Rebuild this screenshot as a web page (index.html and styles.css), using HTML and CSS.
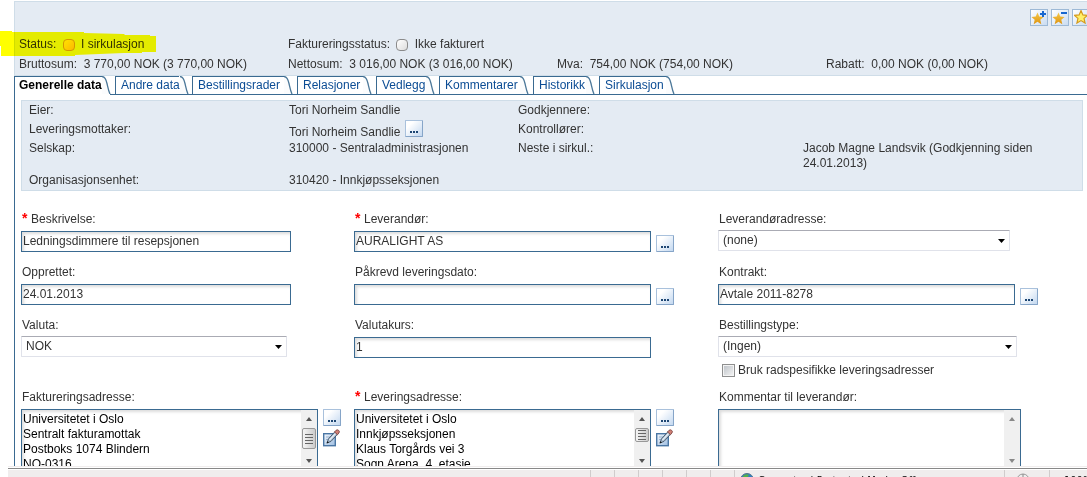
FILE: index.html
```html
<!DOCTYPE html>
<html lang="no">
<head>
<meta charset="utf-8">
<title>Bestilling</title>
<link rel="stylesheet" href="styles.css">
</head>
<body>
<svg width="0" height="0" class="defs" aria-hidden="true">
  <defs>
    <linearGradient id="gold" x1="0" y1="0" x2="0" y2="1"><stop offset="0" stop-color="#f6c84a"/><stop offset="1" stop-color="#dd9410"/></linearGradient>
    <linearGradient id="sheet" x1="0" y1="0" x2="1" y2="1"><stop offset="0" stop-color="#f4f8fd"/><stop offset="1" stop-color="#9cbce0"/></linearGradient>
    <symbol id="star" viewBox="0 0 12 12"><path d="M6 0.5 7.6 4.2 11.6 4.6 8.6 7.2 9.5 11.2 6 9.1 2.5 11.2 3.4 7.2 0.4 4.6 4.4 4.2Z"/></symbol>
    <symbol id="slant" viewBox="0 0 9 18"><path d="M0 0C3 0 4 2 5 7S6.500 15 8 18H0Z" fill="#fbfcfd"/><path d="M0 .5C3 .5 4 3 5 7.500S6.500 15 8 18" fill="none" stroke="#4c7899" stroke-width="1.300"/></symbol>
    <symbol id="pencil" viewBox="0 0 17 18">
      <rect x=".7" y="4.700" width="11.600" height="12" fill="url(#sheet)" stroke="#4a76a4" stroke-width="1.400"/>
      <path d="M3 8h4M3 10.500h2" stroke="#9bb4cf"/>
      <path d="M4 14 5.500 9.800 11.700 3 14.300 5.500 8 12.400Z" fill="#a9bccf" stroke="#33485c" stroke-width=".8"/>
      <path d="M6.400 11.200 13 4.200" stroke="#eef4fa" stroke-width="1.200"/>
      <path d="M11.500 3 13 1.300Q14.300.2 15.700 1.400T15.900 4L14.500 5.700Z" fill="#d08076" stroke="#743b39" stroke-width=".8"/>
      <path d="M3.500 14.600 4.500 12.200 6 13.600Z" fill="#111"/>
    </symbol>
  </defs>
</svg>
<div class="page">
  <header class="summary">
    <div class="tools">
      <button class="tool" aria-label="Legg til favoritt"><svg viewBox="0 0 16 15"><use href="#star" x="0" y="2" width="13" height="13" fill="url(#gold)"/><path d="M9 4h6M12 1v6" stroke="#1767cf" stroke-width="2"/></svg></button>
      <button class="tool" aria-label="Fjern favoritt"><svg viewBox="0 0 16 15"><use href="#star" x="0" y="2" width="13" height="13" fill="url(#gold)"/><path d="M9 3h6" stroke="#1767cf" stroke-width="2"/></svg></button>
      <button class="tool" aria-label="Favoritter"><svg viewBox="0 0 16 15"><use href="#star" x="1" y="0" width="14" height="14" fill="#fff06a" stroke="#d59a1c"/></svg></button>
    </div>
    <div class="sums">
      <div>Status: <i class="lamp lamp-on"></i> I sirkulasjon</div>
      <div class="wide">Faktureringsstatus: <i class="lamp"></i> Ikke fakturert</div>
      <div>Bruttosum:&nbsp; 3 770,00 NOK (3 770,00 NOK)</div>
      <div>Nettosum:&nbsp; 3 016,00 NOK (3 016,00 NOK)</div>
      <div>Mva:&nbsp; 754,00 NOK (754,00 NOK)</div>
      <div>Rabatt:&nbsp; 0,00 NOK (0,00 NOK)</div>
    </div>
    <svg class="marker" viewBox="0 0 157 28" aria-hidden="true"><path d="M0 1H12V2L84 2V3L124 4 125 5H150V6H156V22H142V23H124L75 25V26H37L1 26V16H0Z" fill="#ff0"/></svg>
  </header>

  <nav class="tabs">
    <a class="tab active" href="#">Generelle data<svg><use href="#slant"/></svg></a>
    <a class="tab" href="#">Andre data<svg><use href="#slant"/></svg></a>
    <a class="tab" href="#">Bestillingsrader<svg><use href="#slant"/></svg></a>
    <a class="tab" href="#">Relasjoner<svg><use href="#slant"/></svg></a>
    <a class="tab" href="#">Vedlegg<svg><use href="#slant"/></svg></a>
    <a class="tab" href="#">Kommentarer<svg><use href="#slant"/></svg></a>
    <a class="tab" href="#">Historikk<svg><use href="#slant"/></svg></a>
    <a class="tab" href="#">Sirkulasjon<svg><use href="#slant"/></svg></a>
  </nav>

  <main class="content">
    <section class="info">
      <span>Eier:</span><span>Tori Norheim Sandlie</span><span>Godkjennere:</span><span></span>
      <span>Leveringsmottaker:</span><span class="pick">Tori Norheim Sandlie <button class="more" aria-label="Velg mottaker"></button></span><span>Kontrollører:</span><span></span>
      <span>Selskap:</span><span>310000 - Sentraladministrasjonen</span><span>Neste i sirkul.:</span><span>Jacob Magne Landsvik (Godkjenning siden 24.01.2013)</span>
      <span>Organisasjonsenhet:</span><span>310420 - Innkjøpsseksjonen</span>
    </section>

    <form class="form">
      <div class="field"><label for="f1"><b>*</b>Beskrivelse:</label><div class="row"><input class="box short" id="f1" value="Ledningsdimmere til resepsjonen"></div></div>
      <div class="field"><label for="f2"><b>*</b>Leverandør:</label><div class="row"><input class="box" id="f2" value="AURALIGHT AS"><button type="button" class="more" aria-label="Velg leverandør"></button></div></div>
      <div class="field"><label for="f3">Leverandøradresse:</label><div class="drop"><select id="f3"><option>(none)</option></select></div></div>

      <div class="field"><label for="f4">Opprettet:</label><div class="row"><input class="box short" id="f4" value="24.01.2013"></div></div>
      <div class="field"><label for="f5">Påkrevd leveringsdato:</label><div class="row"><input class="box" id="f5"><button type="button" class="more" aria-label="Velg dato"></button></div></div>
      <div class="field"><label for="f6">Kontrakt:</label><div class="row"><input class="box" id="f6" value="Avtale 2011-8278"><button type="button" class="more" aria-label="Velg kontrakt"></button></div></div>

      <div class="field"><label for="f7">Valuta:</label><div class="drop drop-s"><select id="f7"><option>NOK</option></select></div></div>
      <div class="field"><label for="f8">Valutakurs:</label><div class="row"><input class="box" id="f8" value="1"></div></div>
      <div class="field"><label for="f9">Bestillingstype:</label><div class="drop drop-l"><select id="f9"><option>(Ingen)</option></select></div>
        <div class="check"><input type="checkbox" id="f10"><label for="f10">Bruk radspesifikke leveringsadresser</label></div></div>

      <div class="field"><label for="f11">Faktureringsadresse:</label>
        <div class="row top"><div class="area"><textarea id="f11">Universitetet i Oslo
Sentralt fakturamottak
Postboks 1074 Blindern
NO-0316</textarea><div class="scroll"><i class="up"></i><i class="thumb"></i><i class="down"></i></div></div>
        <div class="side"><button type="button" class="more" aria-label="Velg adresse"></button><button type="button" class="edit" aria-label="Rediger"><svg width="17" height="18"><use href="#pencil"/></svg></button></div></div></div>
      <div class="field"><label for="f12"><b>*</b>Leveringsadresse:</label>
        <div class="row top"><div class="area"><textarea id="f12">Universitetet i Oslo
Innkjøpsseksjonen
Klaus Torgårds vei 3
Sogn Arena, 4. etasje</textarea><div class="scroll"><i class="up"></i><i class="thumb thumb-s"></i><i class="down"></i></div></div>
        <div class="side"><button type="button" class="more" aria-label="Velg adresse"></button><button type="button" class="edit" aria-label="Rediger"><svg width="17" height="18"><use href="#pencil"/></svg></button></div></div></div>
      <div class="field"><label for="f13">Kommentar til leverandør:</label>
        <div class="row top"><div class="area area-l"><textarea id="f13"></textarea><div class="scroll off"><i class="up"></i><i class="down"></i></div></div></div></div>
    </form>
  </main>

  <footer class="statusbar">
    <span class="cell"></span><span class="cell"></span><span class="cell"></span><span class="cell"></span><span class="cell"></span><span class="cell"></span>
    <span class="cell zone"><svg width="14" height="14" viewBox="0 0 14 14"><circle cx="7" cy="7" r="6.500" fill="#2f7fc4" stroke="#55758c"/><path d="M3 3Q6 0 9 2L7 5 3 6ZM9 5l4 1-2 4Z" fill="#55b04a"/></svg>Computer | Protected Mode: Off</span>
    <span class="cell lock"><svg width="14" height="14" viewBox="0 0 14 14"><circle cx="7" cy="7" r="6" fill="#eee" stroke="#999"/><path d="M7 1v6" stroke="#888"/></svg></span>
    <span class="cell zoom"><svg width="12" height="14" viewBox="0 0 12 14"><circle cx="6" cy="6" r="5.500" fill="#d9ecfb" stroke="#6d94b8"/><path d="M6 1v9M2 6h8" stroke="#1660b5" stroke-width="2"/></svg>100%</span>
  </footer>
</div>
</body>
</html>
```
FILE: styles.css
```css
* { box-sizing: border-box; }
body { margin: 0; background: #fff; color: #333; font: 12px/15px "Liberation Sans", Arial, sans-serif; }
button, input, select, textarea { font: inherit; color: inherit; margin: 0; }
.defs { position: absolute; }
.page { display: flex; flex-direction: column; height: 100vh; overflow: hidden; }

.summary { position: relative; flex: none; margin: 1px 0 0 14px; padding: 7px 0 3px 4px; background: #e4ebf3; border: 1px solid #cfdde8; border-right: 0; }
.tools { display: flex; justify-content: flex-end; gap: 3px; margin-right: -3px; }
.tool { width: 18px; height: 17px; padding: 0; border: 1px solid #9db9d6; background: linear-gradient(135deg, #fff, #cadcf1); }
.tool svg { display: block; width: 16px; height: 15px; }
.sums { display: grid; grid-template-columns: 269fr 269fr 269fr 261fr; row-gap: 5px; padding-top: 11px; white-space: nowrap; }
.wide { grid-column: span 3; }
.lamp { display: inline-block; width: 12px; height: 12px; margin: 0 3px; vertical-align: -3px; border: 1px solid #8b8b8b; border-radius: 4px; background: linear-gradient(135deg, #fff, #ddd); }
.lamp-on { border-color: #d59600; background: linear-gradient(135deg, #ffe34d, #fdb813); }
.marker { position: absolute; left: -15px; top: 28px; width: 157px; height: 28px; mix-blend-mode: multiply; }

.tabs { flex: none; display: grid; grid-template-columns: 96px 72px 100px 74px 58px 89px 61px 75px; gap: 5px; margin-left: 14px; height: 19px; border-bottom: 1px solid #3a6a91; }
.tab { display: flex; justify-content: space-between; height: 18px; padding-left: 5px; border-left: 1px solid #3a6a91; color: #0b4c94; line-height: 19px; text-decoration: none; white-space: nowrap; background: linear-gradient(#3a6a91, #3a6a91) 0 0 / calc(100% - 8px) 1px no-repeat; }
.tab svg { flex: none; width: 9px; height: 18px; margin-right: -1px; }
.active { height: 19px; padding-left: 4px; background-color: #fff; color: #000; font-weight: bold; }

.content { flex: 1; min-height: 0; overflow: hidden; margin-left: 14px; padding: 5px 4px 0 6px; border-left: 1px solid #3a6a91; }
.info { display: grid; grid-template-columns: 260fr 229fr 285fr 279fr; grid-template-rows: 16px 22px 32px 15px; padding: 2px 0 2px 7px; border: 1px solid #cfdde8; background: #e4ebf3; }
.info span:nth-child(12) { padding-right: 30px; }
.info span:nth-child(n+5):nth-child(-n+8) { padding-top: 3px; }
.info .pick:nth-child(6) { display: flex; align-items: flex-end; gap: 5px; padding: 0 0 1px; }
.pick .more { margin-bottom: 3px; }

.form { display: grid; grid-template-columns: 333fr 364fr 365fr; padding-top: 21px; }
.field { min-height: 53px; }
.field > label { display: block; padding-left: 1px; margin-bottom: 4px; }
.field b { display: inline-block; width: 9px; color: #f00; font-size: 14px; line-height: 12px; }
.row { display: flex; align-items: flex-end; gap: 5px; }
.box { width: 297px; height: 21px; padding: 0 1px 2px; border: 1px solid #3a6a91; background: #fff; box-shadow: inset 2px 2px 3px #ddd; }
.short { width: 270px; }
.more { position: relative; flex: none; width: 18px; height: 17px; padding: 0; border: 1px solid #a9c1dc; border-right-color: #86a5c8; border-bottom-color: #86a5c8; border-radius: 1px; background: linear-gradient(135deg, #fff 25%, #c3d8f0); }
.more::after { content: ""; position: absolute; left: 4px; bottom: 3px; width: 8px; height: 2px; background: repeating-linear-gradient(90deg, #1d4673 0 2px, transparent 2px 3px); }
.drop { position: relative; width: 292px; margin-top: -1px; }
.drop-s { width: 266px; }
.drop-l { width: 299px; }
.drop select { display: block; appearance: none; width: 100%; height: 21px; padding: 0 4px; border: 1px solid #e0e2ea; border-top-color: #aaabb4; border-radius: 1px; background: #fff; }
.drop::after { content: ""; position: absolute; right: 5px; top: 9px; width: 7px; height: 4px; background: #000; clip-path: polygon(0 0, 100% 0, 50% 100%); pointer-events: none; }
.check { display: flex; align-items: center; gap: 3px; padding: 6px 0 12px 4px; }
.check input { appearance: none; width: 13px; height: 13px; border: 1px solid #8e8f8f; background: linear-gradient(135deg, #bbc0c6, #f6f6f6); box-shadow: inset 0 0 0 1px #f4f4f4; }
.top { align-items: flex-start; }
.area { display: flex; width: 297px; height: 62px; border: 1px solid #3a6a91; box-shadow: inset 2px 2px 3px #ddd; }
.area-l { width: 303px; }
.area textarea { flex: 1; min-width: 0; padding: 2px 1px; border: 0; background: none; color: #000; resize: none; overflow: hidden; white-space: pre; line-height: 15px; }
.scroll { display: flex; flex-direction: column; width: 16px; padding: 7px 0; background: #f0f0f0; }
.up, .down { width: 6px; height: 4px; margin: 0 5px; background: #555; clip-path: polygon(50% 0, 100% 100%, 0 100%); }
.down { margin-top: auto; clip-path: polygon(0 0, 100% 0, 50% 100%); }
.off i { background: #888; }
.thumb { width: 14px; height: 21px; margin: 7px 0 0 1px; border: 1px solid #989898; border-radius: 2px; background: repeating-linear-gradient(#666 0 1px, transparent 1px 3px) center / 8px 10px no-repeat, linear-gradient(90deg, #f5f5f5, #ccc); }
.thumb-s { height: 14px; }
.side { display: flex; flex-direction: column; gap: 3px; }
.edit { height: 18px; padding: 0; border: 0; background: none; }
.edit svg { display: block; }

.statusbar { flex: none; display: flex; justify-content: flex-end; height: 11px; margin-left: 8px; padding-top: 4px; overflow: hidden; background: linear-gradient(#f0eded 1px, #fff 1px 2px, #888 2px 3px, #fff 3px 4px, #f0eded 4px); color: #000; font: 11px/15px "DejaVu Sans Condensed", sans-serif; white-space: nowrap; }
.cell { flex: none; width: 24px; height: 20px; border-left: 1px solid #d0cccc; }
.zone, .lock, .zoom { display: flex; gap: 4px; padding: 3px 0 0 5px; }
.zone { width: 270px; }
.lock { width: 45px; padding-left: 11px; }
.zoom { width: 38px; padding-left: 10px; }
```
